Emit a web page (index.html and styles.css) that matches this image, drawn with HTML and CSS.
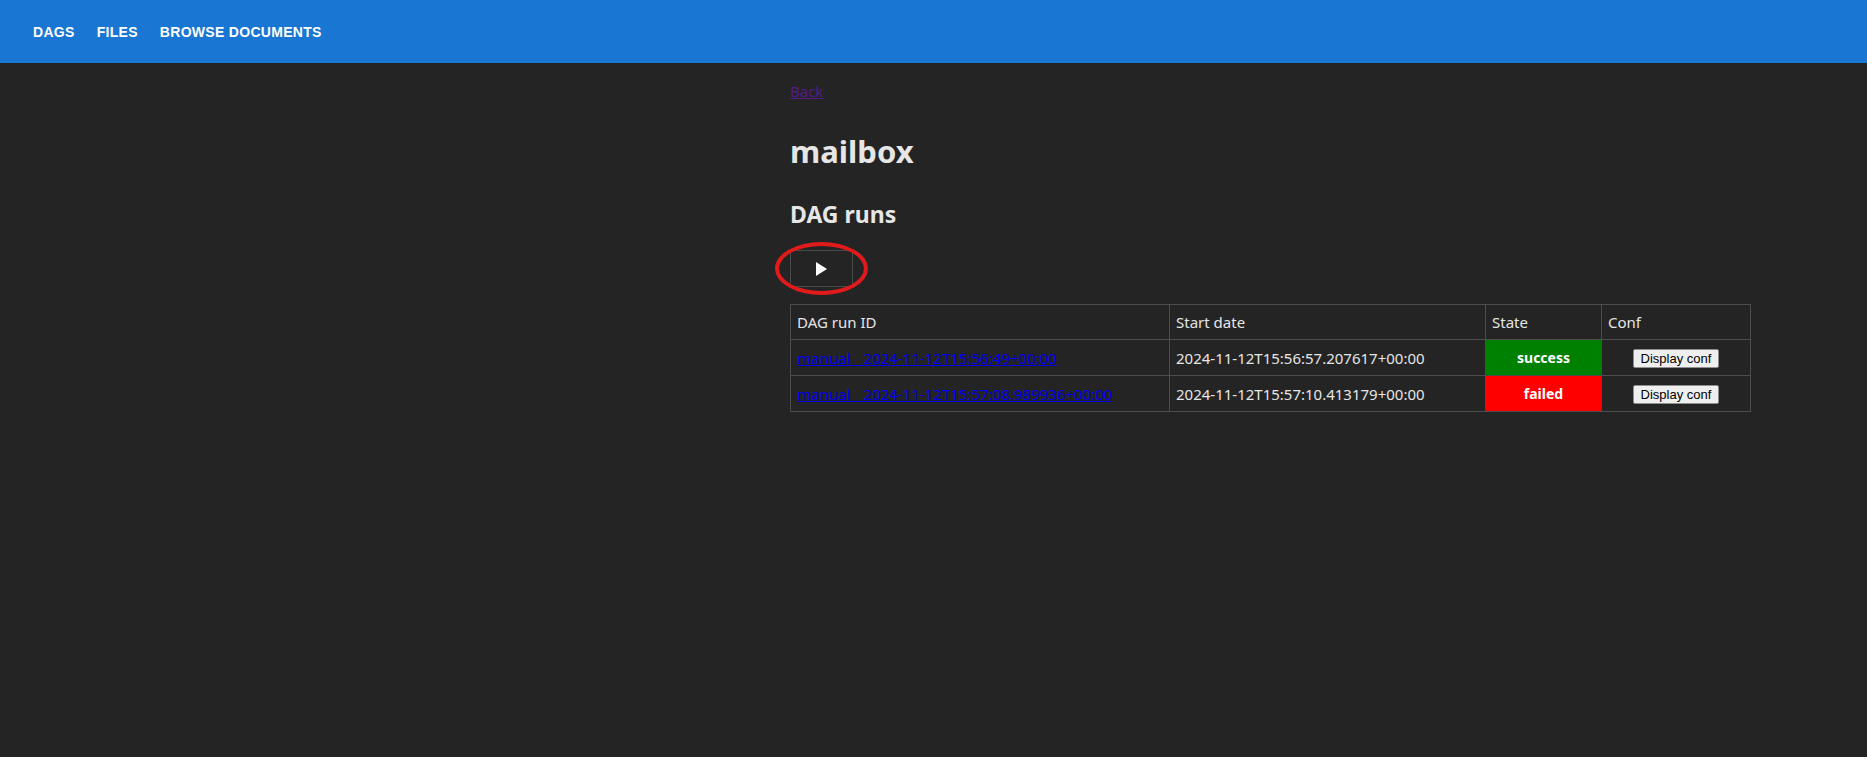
FILE: index.html
```html
<!DOCTYPE html>
<html lang="en">
<head>
<meta charset="utf-8">
<title>mailbox</title>
<link rel="stylesheet" href="styles.css">
</head>
<body>
<nav class="topbar">
  <a class="nav-link" href="#">DAGS</a>
  <a class="nav-link" href="#">FILES</a>
  <a class="nav-link" href="#">BROWSE DOCUMENTS</a>
</nav>
<main class="content">
  <a class="back" href="#">Back</a>
  <h1 class="title">mailbox</h1>
  <h2 class="subtitle">DAG runs</h2>
  <div class="trigger-wrap">
    <button class="trigger" type="button" aria-label="Trigger DAG">
      <svg width="11" height="14" viewBox="0 0 11 14"><path d="M0 0 L11 7 L0 14 Z" fill="#ffffff"/></svg>
    </button>
    <span class="highlight"></span>
  </div>
  <table class="runs">
    <colgroup>
      <col class="c-id"><col class="c-date"><col class="c-state"><col class="c-conf">
    </colgroup>
    <thead>
      <tr><th>DAG run ID</th><th>Start date</th><th>State</th><th>Conf</th></tr>
    </thead>
    <tbody>
      <tr>
        <td><a class="run-link" href="#">manual__2024-11-12T15:56:49+00:00</a></td>
        <td class="date">2024-11-12T15:56:57.207617+00:00</td>
        <td class="state success">success</td>
        <td class="conf"><button class="conf-btn" type="button">Display conf</button></td>
      </tr>
      <tr>
        <td><a class="run-link" href="#">manual__2024-11-12T15:57:08.989936+00:00</a></td>
        <td class="date">2024-11-12T15:57:10.413179+00:00</td>
        <td class="state failed">failed</td>
        <td class="conf"><button class="conf-btn" type="button">Display conf</button></td>
      </tr>
    </tbody>
  </table>
</main>
</body>
</html>
```
FILE: styles.css
```css
html, body {
  margin: 0;
  padding: 0;
  background: #242424;
  height: 100%;
}
body {
  font-family: "Noto Sans", "Open Sans", sans-serif;
  color: #e6e6e6;
}
.topbar {
  height: 63px;
  background: #1976d2;
  display: flex;
  align-items: center;
  gap: 22px;
  padding-left: 33px;
}
.nav-link {
  font-family: "Liberation Sans", Arial, sans-serif;
  font-weight: bold;
  font-size: 14px;
  letter-spacing: 0.3px;
  color: #ffffff;
  text-decoration: none;
}
.content {
  padding-left: 790px;
  display: flex;
  flex-direction: column;
  align-items: flex-start;
}
.back {
  margin-top: 18px;
  font-size: 15px;
  line-height: 20px;
  color: #551a8b;
}
.title {
  margin: 30px 0 0;
  font-size: 31px;
  line-height: 40px;
  font-weight: bold;
}
.subtitle {
  margin: 28px 0 0;
  font-size: 23px;
  line-height: 30px;
  font-weight: bold;
}
.trigger-wrap {
  position: relative;
  margin-top: 21px;
}
.trigger {
  width: 63px;
  height: 37px;
  border: 1px solid #4a4a4a;
  background: transparent;
  display: flex;
  align-items: center;
  justify-content: center;
  padding: 0;
  margin: 0;
}
.highlight {
  position: absolute;
  left: -15px;
  top: -8px;
  width: 85px;
  height: 45px;
  border: 4px solid #e01b1b;
  border-radius: 50%;
  pointer-events: none;
}
.runs {
  margin-top: 17px;
  border-collapse: collapse;
  table-layout: fixed;
  width: 960px;
  font-size: 15px;
}
.c-id { width: 379px; }
.c-date { width: 316px; }
.c-state { width: 116px; }
.c-conf { width: 149px; }
.runs th, .runs td {
  border: 1px solid #4d4d4d;
  padding: 0 6px;
  text-align: left;
  font-weight: normal;
  white-space: nowrap;
}
.runs thead th {
  height: 34px;
}
.runs tbody td {
  height: 35px;
}
.run-link {
  color: #0000ee;
}
.runs td.state {
  text-align: center;
  font-weight: bold;
  font-size: 14px;
  color: #ffffff;
}
.success { background: #008000; }
.failed { background: #ff0000; }
.runs td.conf {
  text-align: center;
}
.conf-btn {
  font-family: "Liberation Sans", Arial, sans-serif;
  font-size: 13px;
  height: 19px;
  padding: 0 7px;
  border: 1px solid #8f8f8f;
  border-radius: 2px;
  background: #efefef;
  color: #000000;
  line-height: 17px;
  vertical-align: middle;
}
```
